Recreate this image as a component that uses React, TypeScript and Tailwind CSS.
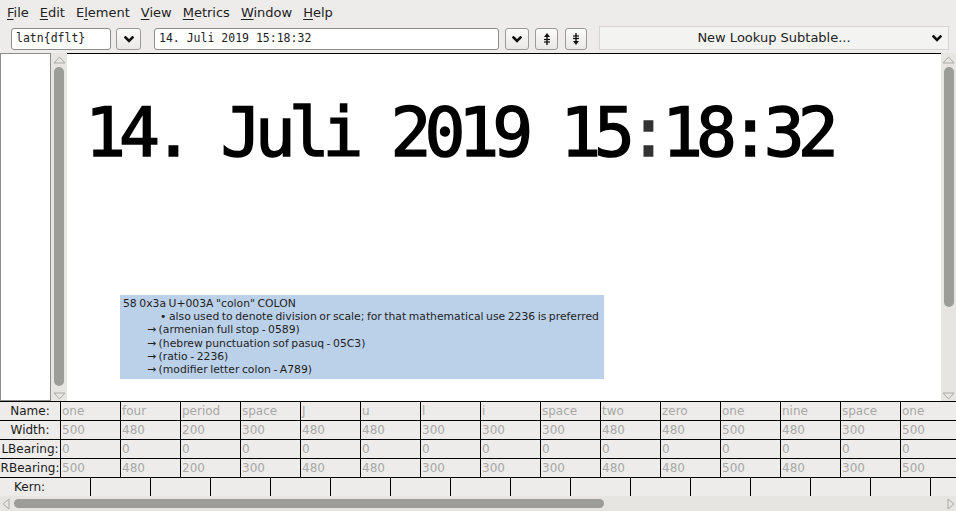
import React from "react";

const names = ["one","four","period","space","J","u","l","i","space","two","zero","one","nine","space","one"];
const widths = [500,480,200,300,480,480,300,300,300,480,480,500,480,300,500];

function Chevron() {
  return (
    <svg width="10" height="7" viewBox="0 0 10 7">
      <path d="M1.5 1.5 L5 5 L8.5 1.5" fill="none" stroke="#111" strokeWidth="2.6" strokeLinecap="square" />
    </svg>
  );
}

function ArrowIcon({ up }: { up: boolean }) {
  return (
    <svg width="8" height="14" viewBox="0 0 8 14">
      {up ? (
        <>
          <path d="M4 1 L7 5 L1 5 Z" fill="#111" />
          <line x1="4" y1="4" x2="4" y2="13" stroke="#111" strokeWidth="1.4" />
          <line x1="1" y1="7.5" x2="7" y2="7.5" stroke="#111" strokeWidth="1.2" />
          <line x1="1" y1="10" x2="7" y2="10" stroke="#111" strokeWidth="1.2" />
        </>
      ) : (
        <>
          <path d="M4 13 L7 9 L1 9 Z" fill="#111" />
          <line x1="4" y1="1" x2="4" y2="10" stroke="#111" strokeWidth="1.4" />
          <line x1="1" y1="4" x2="7" y2="4" stroke="#111" strokeWidth="1.2" />
          <line x1="1" y1="6.5" x2="7" y2="6.5" stroke="#111" strokeWidth="1.2" />
        </>
      )}
    </svg>
  );
}

function Tri({ dir }: { dir: "up" | "down" | "left" | "right" }) {
  const d =
    dir === "up" ? "M1 7 L6.5 1 L12 7 Z" :
    dir === "down" ? "M1 1 L6.5 7 L12 1 Z" :
    dir === "left" ? "M7 1 L1 6 L7 11 Z" : "M1 1 L7 6 L1 11 Z";
  const vert = dir === "up" || dir === "down";
  return (
    <svg width={vert ? 13 : 8} height={vert ? 8 : 12} viewBox={vert ? "0 0 13 8" : "0 0 8 12"}>
      <path d={d} fill="none" stroke="#a9a9a6" strokeWidth="1" />
    </svg>
  );
}

function Btn({ children, w }: { children: React.ReactNode; w: string }) {
  return (
    <div className={`${w} h-[22px] rounded-[3px] border border-[#9a9a98] bg-gradient-to-b from-[#fbfbfa] to-[#e9e8e6] flex items-center justify-center`}>
      {children}
    </div>
  );
}

const Menu = ({ label, u }: { label: string; u: number }) => (
  <span>
    {label.slice(0, u)}
    <span className="underline underline-offset-2">{label[u]}</span>
    {label.slice(u + 1)}
  </span>
);

export default function App() {
  return (
    <div className="w-[956px] h-[511px] bg-[#edeceb] flex flex-col overflow-hidden text-[#222] font-['DejaVu_Sans',sans-serif]">
      {/* menu */}
      <div className="h-[24px] flex items-center pt-[1px] pl-[7px] gap-[11px] text-[13px]">
        <Menu label="File" u={0} />
        <Menu label="Edit" u={0} />
        <Menu label="Element" u={1} />
        <Menu label="View" u={0} />
        <Menu label="Metrics" u={0} />
        <Menu label="Window" u={0} />
        <Menu label="Help" u={0} />
      </div>
      {/* toolbar */}
      <div className="h-[29px] flex items-start pt-[4px] pl-[11px]">
        <div className="w-[100px] h-[22px] rounded-[3px] border border-[#8c8c8a] bg-white flex items-center pl-[4px] font-['DejaVu_Sans_Mono',monospace] text-[11.5px]">
          latn{"{"}dflt{"}"}
        </div>
        <div className="ml-[5px]"><Btn w="w-[25px]"><Chevron /></Btn></div>
        <div className="ml-[13px] w-[345px] h-[22px] rounded-[3px] border border-[#8c8c8a] bg-white flex items-center pl-[4px] font-['DejaVu_Sans_Mono',monospace] text-[11.5px]">
          14. Juli 2019 15:18:32
        </div>
        <div className="ml-[6px]"><Btn w="w-[24px]"><Chevron /></Btn></div>
        <div className="ml-[6px]"><Btn w="w-[23px]"><ArrowIcon up /></Btn></div>
        <div className="ml-[7px]"><Btn w="w-[22px]"><ArrowIcon up={false} /></Btn></div>
        <div className="ml-[12px] -mt-[2px] w-[350px] h-[24px] border border-[#d6d5d3] bg-[#f3f3f2] flex items-center relative text-[13px]">
          <span className="flex-1 text-center">New Lookup Subtable...</span>
          <span className="absolute right-[6px] top-[8px]"><Chevron /></span>
        </div>
      </div>
      {/* main */}
      <div className="h-[348px] flex">
        <div className="w-[51px] h-full bg-white border border-[#8e8e8c]" />
        <div className="w-[16px] h-full bg-[#e6e5e2] flex flex-col items-center pt-[3px] pb-[1px]">
          <Tri dir="up" />
          <div className="w-[10px] flex-1 mt-[3px] mb-[6px] rounded-full bg-[#9c9d98]" />
          <Tri dir="down" />
        </div>
        <div className="flex-1 h-full bg-white border-t border-black relative">
          <div className="pl-[18px] pt-[44px] leading-[70px] text-[68px] font-normal tracking-[-7px] [-webkit-text-stroke:1.5px_black] font-['DejaVu_Sans_Mono',monospace] text-black whitespace-pre">
            14. Juli 2019 15<span className="text-[#333] [-webkit-text-stroke:1.5px_#333]">:</span>18:32
          </div>
          <div className="absolute left-[53px] top-[241px] w-[484px] h-[84px] bg-[#bbd1ea] text-[10.8px] leading-[13.2px] [word-spacing:-0.9px] whitespace-nowrap text-[#1e1e1e] pl-[3px] pt-[2px]">
            <div>58 0x3a U+003A "colon" COLON</div>
            <div className="pl-[37px]">• also used to denote division or scale; for that mathematical use 2236 is preferred</div>
            <div className="pl-[24px]">→ (armenian full stop - 0589)</div>
            <div className="pl-[24px]">→ (hebrew punctuation sof pasuq - 05C3)</div>
            <div className="pl-[24px]">→ (ratio - 2236)</div>
            <div className="pl-[24px]">→ (modifier letter colon - A789)</div>
          </div>
        </div>
        <div className="w-[15px] h-full bg-[#e6e5e2] flex flex-col items-center pt-[3px] pb-[1px]">
          <Tri dir="up" />
          <div className="w-[10px] h-[240px] mt-[3px] rounded-full bg-[#9c9d98]" />
          <div className="flex-1" />
          <Tri dir="down" />
        </div>
      </div>
      {/* table */}
      <div className="border-t border-black text-[12px]">
        {[
          { label: "Name:", vals: names },
          { label: "Width:", vals: widths.map(String) },
          { label: "LBearing:", vals: widths.map(() => "0") },
          { label: "RBearing:", vals: widths.map(String) },
        ].map((row) => (
          <div key={row.label} className="h-[19px] flex border-b border-black">
            <div className="w-[61px] shrink-0 border-r border-black flex items-center justify-center text-[#1a1a1a]">
              {row.label}
            </div>
            {row.vals.map((v, i) => (
              <div key={i} className="w-[60px] shrink-0 border-r border-black flex items-center pl-[1px] text-[#a8a8a6]">
                {v}
              </div>
            ))}
          </div>
        ))}
        <div className="h-[18px] flex">
          <div className="w-[91px] shrink-0 border-r border-black flex items-center pl-[14px] text-[#1a1a1a]">Kern:</div>
          {Array.from({ length: 15 }).map((_, i) => (
            <div key={i} className="w-[60px] shrink-0 border-r border-black" />
          ))}
        </div>
      </div>
      {/* hscroll */}
      <div className="h-[15px] bg-[#e6e5e2] flex items-center pl-[2px] pr-[1px]">
        <Tri dir="left" />
        <div className="ml-[4px] w-[590px] h-[9px] rounded-full bg-[#9c9d98]" />
        <div className="flex-1" />
        <Tri dir="right" />
      </div>
    </div>
  );
}
